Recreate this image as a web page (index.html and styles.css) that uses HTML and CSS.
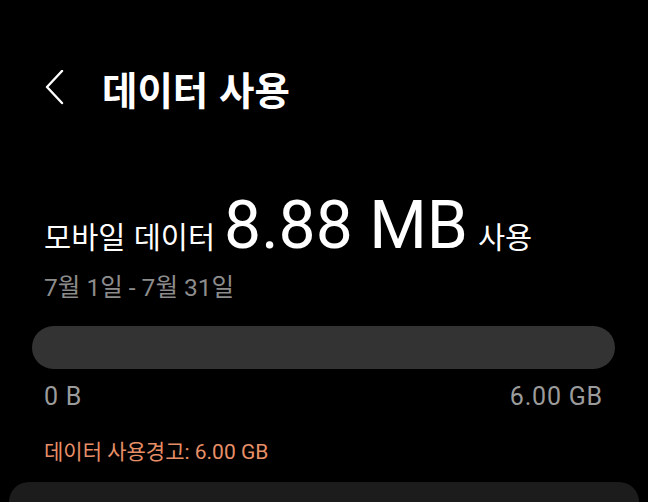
FILE: index.html
```html
<!DOCTYPE html>
<html lang="ko">
<head>
    <meta charset="UTF-8">
    <meta name="viewport" content="width=device-width, initial-scale=1.0">
    <title>데이터 사용</title>
    <link rel="stylesheet" href="styles.css">
</head>
<body>
<div class="header">
    <a class="back">
        <svg width="20" height="36" viewBox="0 0 20 36">
            <path d="M17 1 L2 17 L17 33" fill="none" stroke="#fff" stroke-width="2.4" stroke-linecap="round" stroke-linejoin="round"/>
        </svg>
    </a>
    <h1 class="title">데이터 사용</h1>
</div>

<div class="content">
    <div class="usage">
        <span class="usage-label">모바일 데이터</span>
        <span class="usage-value">8.88 MB</span>
        <span class="usage-label">사용</span>
    </div>
    <p class="period">7월 1일 - 7월 31일</p>

    <div class="bar"><div class="bar-fill" style="width:0%"></div></div>
    <div class="bar-labels">
        <span>0 B</span>
        <span>6.00 GB</span>
    </div>

    <p class="warning">데이터 사용경고: 6.00 GB</p>
</div>

<div class="card"></div>
</body>
</html>
```

FILE: styles.css
```css
* {
    margin: 0;
    padding: 0;
    box-sizing: border-box;
}

html, body {
    background: #000;
}

body {
    width: 648px;
    height: 502px;
    overflow: hidden;
    color: #fff;
    font-family: "Roboto", "Noto Sans CJK KR", sans-serif;
}

.header {
    display: flex;
    align-items: center;
    height: 40px;
    margin-top: 68px;
    padding-left: 45px;
}

.back {
    display: flex;
    width: 57px;
}

.title {
    font-family: "Noto Sans CJK KR", sans-serif;
    font-size: 38.5px;
    font-weight: 700;
    line-height: 40px;
}

.content {
    padding: 0 33px 0 32px;
}

.usage {
    display: flex;
    align-items: baseline;
    margin-top: 88px;
    padding-left: 12px;
    height: 60px;
}

.usage-label {
    font-family: "Noto Sans CJK KR", sans-serif;
    font-size: 29.5px;
}

.usage-value {
    font-size: 66px;
    line-height: 60px;
    margin: 0 10px 0 9px;
}

.period {
    margin-top: 17px;
    padding-left: 12px;
    font-size: 24.5px;
    line-height: 30px;
    color: #8c8c8c;
}

.bar {
    margin-top: 23px;
    height: 43px;
    border-radius: 22px;
    background: #333;
    overflow: hidden;
}

.bar-fill {
    height: 100%;
    background: #3e91ff;
}

.bar-labels {
    display: flex;
    justify-content: space-between;
    padding: 0 12px;
    margin-top: 13px;
    font-size: 25px;
    letter-spacing: 0.8px;
    line-height: 30px;
    color: #9b9b9b;
}

.warning {
    margin-top: 26px;
    padding-left: 12px;
    font-size: 21px;
    line-height: 28px;
    color: #e88f67;
}

.card {
    margin: 16px 9px 0 9px;
    height: 20px;
    border-radius: 32px 32px 0 0;
    background: #1c1c1c;
}
```
